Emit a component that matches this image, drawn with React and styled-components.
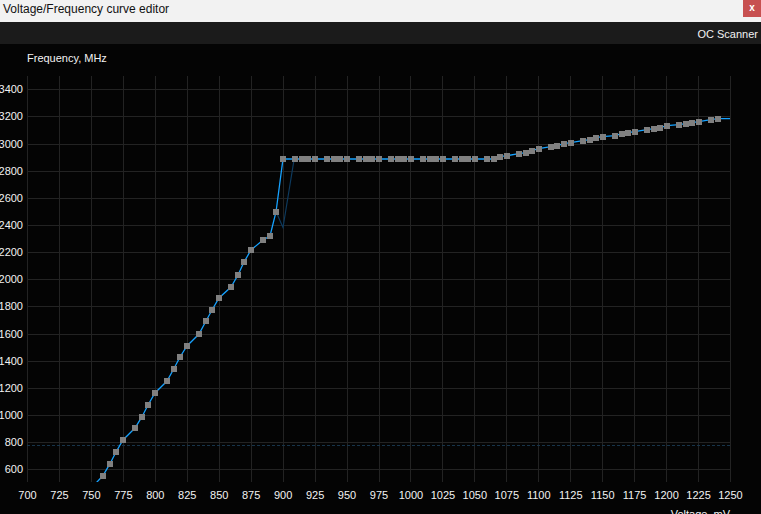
import React from 'react'
import styled, { createGlobalStyle } from 'styled-components'

const GlobalStyle = createGlobalStyle`
  html, body {
    margin: 0;
    padding: 0;
    background: #040404;
    overflow: hidden;
  }
  * {
    box-sizing: border-box;
  }
`

const Window = styled.div`
  display: flex;
  flex-direction: column;
  width: 761px;
  height: 514px;
  font-family: 'Liberation Sans', Arial, sans-serif;
  background: #040404;
  overflow: hidden;
`

const TitleBar = styled.div`
  display: flex;
  align-items: flex-start;
  justify-content: space-between;
  height: 22px;
  background: #f2f2f2;
`

const Title = styled.span`
  padding: 2px 0 0 3px;
  font-size: 12px;
  line-height: 14px;
  color: #111;
`

const CloseButton = styled.div`
  display: flex;
  align-items: center;
  justify-content: center;
  width: 18px;
  height: 17px;
  background: #c75050;
  color: #fff;
  font-size: 10px;
  font-weight: bold;
  line-height: 1;
  padding-bottom: 2px;
`

const Toolbar = styled.div`
  display: flex;
  align-items: center;
  justify-content: flex-end;
  height: 22px;
  padding: 1px 3px 0 0;
  background: #1b1b1b;
`

const ToolbarButton = styled.span`
  font-size: 11px;
  color: #f2f2f2;
`

const ChartPanel = styled.div`
  flex: 1;
  background: #040404;
`

const ChartSvg = styled.svg`
  display: block;
  font-family: 'Liberation Sans', Arial, sans-serif;
  font-size: 11px;
`

const LEFT = 27
const RIGHT = 730
const TOP = 76
const BOTTOM = 482

const xFor = (mv) => LEFT + ((mv - 700) * (RIGHT - LEFT)) / 550
const yFor = (mhz) => 89.3 + (3400 - mhz) * 0.1357

const voltages = Array.from({ length: 23 }, (_, i) => 700 + i * 25)
const freqs = Array.from({ length: 15 }, (_, i) => 3400 - i * 200)

const flatXs = [
  283, 295, 301.7, 307.7, 315, 327, 333.7, 339.7, 347, 359, 365.7, 371.7, 379,
  391, 397.7, 403.7, 411, 423, 429.7, 435.7, 443, 455, 461.7, 467.7, 475, 487,
  493.7,
]

const points = [
  [102.7, 476], [110, 463.7], [116, 452], [123, 440], [135, 428],
  [142, 416.7], [148, 405], [155, 393], [167, 381], [173.7, 369],
  [180, 357], [187, 346], [199, 334], [206, 321], [212, 310],
  [219, 298], [231, 287], [238, 275], [244, 262], [251, 250],
  [263, 240], [270, 236], [276, 212],
  ...flatXs.map((x) => [x, 159]),
  [500, 156.7], [507, 155.7], [519, 153.7], [525.7, 152.7], [531.7, 150.7],
  [538.7, 148.7], [551, 146.7], [557.3, 145.7], [563.7, 143.7], [570.7, 142.7],
  [582.7, 140.7], [589.7, 139.7], [595.7, 137.7], [602.7, 136.7], [615, 135.7],
  [621.7, 133.7], [628, 132.7], [634.7, 131.7], [647, 129.7], [653.7, 128.7],
  [660, 127.7], [666.7, 125.7], [679, 124.7], [685.7, 123.7], [692, 122.7],
  [698.7, 121.7], [711, 119.7], [717.7, 118.7],
]

const curvePath = [[96, 483], ...points, [730, 118.7]]
  .map(([x, y], i) => `${i ? 'L' : 'M'}${x} ${y}`)
  .join(' ')

const crisp = (v) => Math.round(v) + 0.5

const Chart = () => (
  <ChartSvg width="761" height="470" viewBox="0 44 761 470">
    <defs>
      <clipPath id="plot">
        <rect x={LEFT} y={TOP} width={RIGHT - LEFT} height={BOTTOM - TOP} />
      </clipPath>
    </defs>

    <text x="27" y="62" fill="#f2f2f2">Frequency, MHz</text>

    {voltages.map((v) => (
      <line
        key={`v${v}`}
        x1={crisp(xFor(v))}
        x2={crisp(xFor(v))}
        y1={TOP}
        y2={BOTTOM}
        stroke="#232323"
        strokeWidth="1"
      />
    ))}
    {freqs.map((f) => (
      <line
        key={`f${f}`}
        x1={LEFT}
        x2={RIGHT}
        y1={crisp(yFor(f))}
        y2={crisp(yFor(f))}
        stroke="#232323"
        strokeWidth="1"
      />
    ))}

    <line
      x1={LEFT}
      x2={RIGHT}
      y1="445.5"
      y2="445.5"
      stroke="#17344a"
      strokeDasharray="3 2"
    />

    {freqs.map((f) => (
      <text
        key={`fl${f}`}
        x="23"
        y={yFor(f) + 4}
        textAnchor="end"
        fill="#f2f2f2"
      >
        {f}
      </text>
    ))}
    {voltages.map((v) => (
      <text
        key={`vl${v}`}
        x={xFor(v) + 0.5}
        y="499"
        textAnchor="middle"
        fill="#f2f2f2"
      >
        {v}
      </text>
    ))}
    <text x={RIGHT} y="518" textAnchor="end" fill="#f2f2f2">
      Voltage, mV
    </text>

    <g clipPath="url(#plot)">
      <path
        d="M277.5 215 L283 227.5 L294 160"
        fill="none"
        stroke="#0d3a5e"
        strokeWidth="1.2"
      />
      <path d={curvePath} fill="none" stroke="#16a2ff" strokeWidth="1.3" />
      {points.map(([x, y], i) => (
        <rect
          key={i}
          x={Math.round(x) - 3}
          y={Math.round(y) - 3}
          width="6"
          height="6"
          fill="#808080"
        />
      ))}
    </g>
  </ChartSvg>
)

const App = () => (
  <Window>
    <GlobalStyle />
    <TitleBar>
      <Title>Voltage/Frequency curve editor</Title>
      <CloseButton>x</CloseButton>
    </TitleBar>
    <Toolbar>
      <ToolbarButton>OC Scanner</ToolbarButton>
    </Toolbar>
    <ChartPanel>
      <Chart />
    </ChartPanel>
  </Window>
)

export default App
